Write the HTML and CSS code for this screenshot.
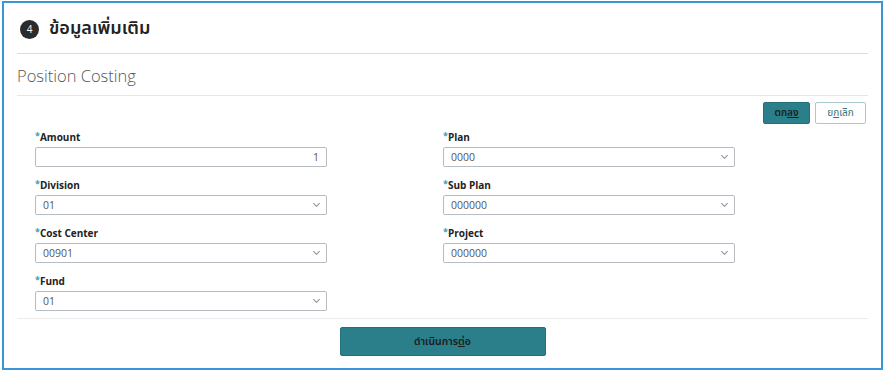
FILE: index.html
```html
<!DOCTYPE html>
<html lang="th">
<head>
  <meta charset="UTF-8">
  <title>ข้อมูลเพิ่มเติม</title>
  <link rel="stylesheet" href="styles.css">
</head>
<body>
  <div class="frame">
    <div class="step-header">
      <span class="step-num">4</span>
      <h1>ข้อมูลเพิ่มเติม</h1>
    </div>
    <h2 class="section-title">Position Costing</h2>

    <div class="actions">
      <button type="button" class="btn btn-primary">ตก<u>ลง</u></button>
      <button type="button" class="btn btn-outline">ย<u>ก</u>เลิก</button>
    </div>

    <form class="costing-form">
      <div class="field">
        <label><span class="req">*</span>Amount</label>
        <input type="text" class="num" value="1">
      </div>
      <div class="field">
        <label><span class="req">*</span>Plan</label>
        <div class="select">0000</div>
      </div>
      <div class="field">
        <label><span class="req">*</span>Division</label>
        <div class="select">01</div>
      </div>
      <div class="field">
        <label><span class="req">*</span>Sub Plan</label>
        <div class="select">000000</div>
      </div>
      <div class="field">
        <label><span class="req">*</span>Cost Center</label>
        <div class="select">00901</div>
      </div>
      <div class="field">
        <label><span class="req">*</span>Project</label>
        <div class="select">000000</div>
      </div>
      <div class="field">
        <label><span class="req">*</span>Fund</label>
        <div class="select">01</div>
      </div>
    </form>

    <div class="footer">
      <button type="button" class="btn-next">ดำเนินการ<u>ต่</u>อ</button>
    </div>
  </div>
</body>
</html>
```

FILE: styles.css
```css
body {
  margin: 0;
  padding: 1px 2px 2px 2px;
  font-family: "Open Sans", "Noto Sans Thai", "Noto Sans", sans-serif;
  color: #222;
  background: #fff;
}

.frame {
  box-sizing: border-box;
  height: 369px;
  border: 2px solid #3b95d9;
  padding: 0 13px;
}

.step-header {
  display: flex;
  align-items: center;
  height: 50px;
  padding-left: 3px;
  border-bottom: 1px solid #dcdcdc;
}

.step-num {
  width: 19px;
  height: 19px;
  border-radius: 50%;
  background: #2b2b2b;
  color: #fff;
  font-size: 10px;
  display: flex;
  align-items: center;
  justify-content: center;
  margin: 2px 10px 0 0;
}

h1 {
  margin: 0;
  font-size: 18px;
  font-weight: 600;
  color: #222;
}

.section-title {
  margin: 0;
  height: 41px;
  line-height: 44px;
  font-size: 16.5px;
  font-weight: 300;
  color: #555;
  border-bottom: 1px solid #e4e8ec;
}

.actions {
  display: flex;
  justify-content: flex-end;
  gap: 5px;
  padding: 6px 2px 0 0;
}

.btn {
  height: 22px;
  font-family: inherit;
  font-size: 10px;
  border-radius: 2px;
  cursor: pointer;
}

.btn-primary {
  width: 47px;
  background: #2a7f8a;
  border: 1px solid #24717b;
  color: #1b1b1b;
  font-weight: 600;
}

.btn-outline {
  width: 51px;
  background: #fff;
  border: 1px solid #a9cbd0;
  color: #3a6f78;
}

.costing-form {
  display: grid;
  grid-template-columns: 292px 292px;
  column-gap: 116px;
  row-gap: 10px;
  padding: 5px 0 0 18px;
}

.field label {
  display: block;
  height: 14px;
  line-height: 13px;
  margin-bottom: 4px;
  font-size: 10px;
  font-weight: 700;
  color: #222;
}

.req {
  color: #3d9bc4;
  font-size: 9px;
  vertical-align: 2px;
}

.field input,
.select {
  display: block;
  box-sizing: border-box;
  width: 100%;
  height: 20px;
  border: 1px solid #b6bcc2;
  border-radius: 2px;
  padding: 0 7px;
  font-family: inherit;
  font-size: 10.5px;
  color: #555;
  margin: 0;
}

.num {
  text-align: right;
  color: #333;
}

.select {
  display: flex;
  align-items: center;
  position: relative;
}

.select::after {
  content: "";
  position: absolute;
  right: 7px;
  top: 5px;
  width: 4px;
  height: 4px;
  border-right: 1px solid #8a9096;
  border-bottom: 1px solid #8a9096;
  transform: rotate(45deg);
}

.footer {
  margin-top: 7px;
  border-top: 1px solid #ececec;
  padding-top: 8px;
  display: flex;
  justify-content: center;
}

.btn-next {
  width: 206px;
  height: 29px;
  background: #2a7f8a;
  border: 1px solid #24717b;
  border-radius: 2px;
  font-family: inherit;
  font-size: 10.5px;
  font-weight: 600;
  color: #1b1b1b;
  cursor: pointer;
}
```
